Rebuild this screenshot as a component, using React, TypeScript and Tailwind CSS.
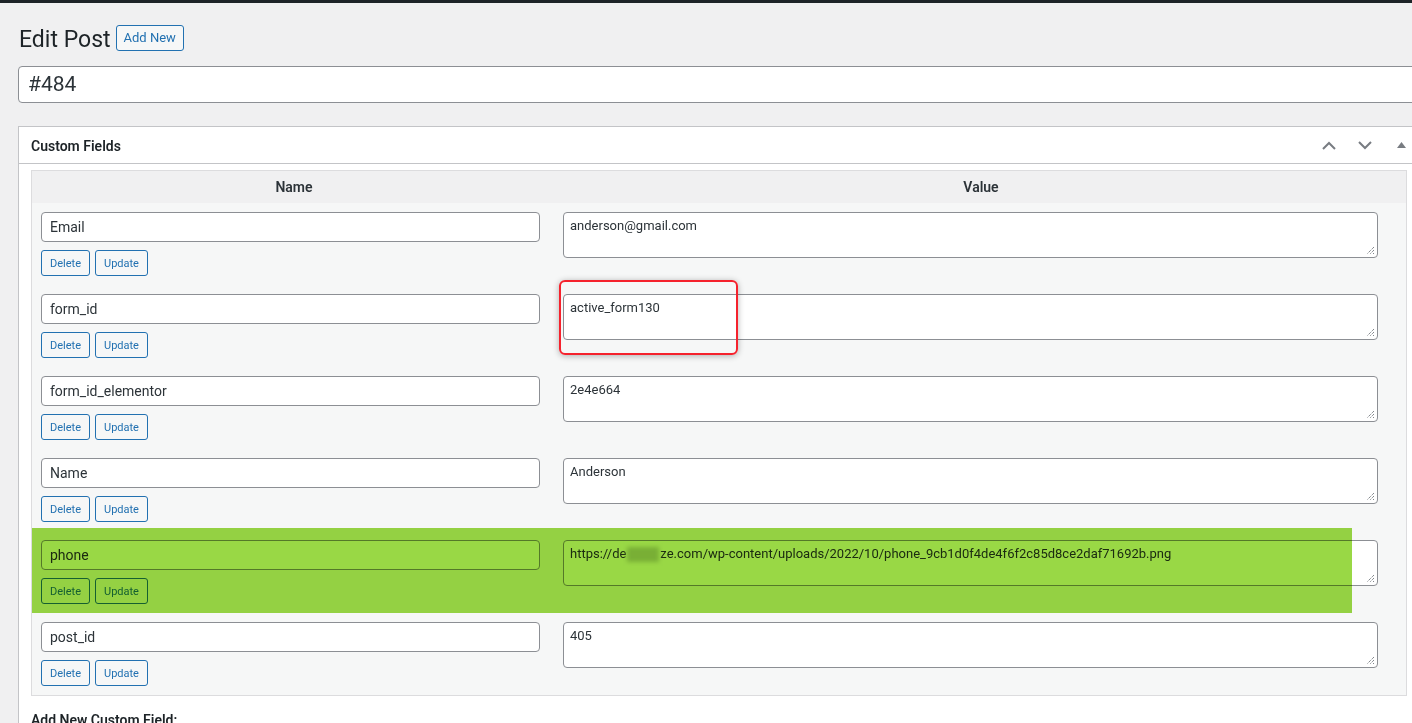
import React from 'react';

const FONT = { fontFamily: '"Segoe UI", Roboto, "Noto Sans", sans-serif' };

interface MetaRow {
  key: string;
  value: string;
}

const rows: MetaRow[] = [
  { key: 'Email', value: 'anderson@gmail.com' },
  { key: 'form_id', value: 'active_form130' },
  { key: 'form_id_elementor', value: '2e4e664' },
  { key: 'Name', value: 'Anderson' },
  { key: 'phone', value: 'url' },
  { key: 'post_id', value: '405' },
];

const SmallButton: React.FC<{ label: string }> = ({ label }) => (
  <button className="h-[26px] px-[8px] text-[11px] leading-none text-[#2271b1] bg-[#f6f7f7] border border-[#2271b1] rounded-[3px]">
    {label}
  </button>
);

const ResizeGrip = () => (
  <svg width="9" height="9" viewBox="0 0 9 9" className="absolute right-[2px] bottom-[2px]">
    <path d="M8 1L1 8M8 4L4 8M8 7L7 8" stroke="#50575e" strokeWidth="1" strokeDasharray="1 1" />
  </svg>
);

const UrlValue = () => (
  <span>
    https://de
    <span className="inline-block w-[32px] h-[15px] align-middle bg-[#c9cfc4] blur-[2px] mx-[1px]"></span>
    ze.com/wp-content/uploads/2022/10/phone_9cb1d0f4de4f6f2c85d8ce2daf71692b.png
  </span>
);

const App: React.FC = () => {
  return (
    <div className="relative w-[1412px] h-[723px] overflow-hidden bg-[#f0f0f1] text-[#1d2327]" style={FONT}>
      {/* admin bar edge */}
      <div className="h-[3px] bg-[#1d2327]" />

      <div className="ml-[18px] w-[1402px]">
        {/* Heading */}
        <div className="flex items-center pt-[21px] h-[48px]">
          <h1 className="ml-[1px] mt-[3px] text-[23px] leading-[27px] font-normal text-[#1d2327]">Edit Post</h1>
          <button className="ml-[5px] h-[26px] px-[7px] text-[13px] text-[#2271b1] bg-[#f6f7f7] border border-[#2271b1] rounded-[3px]">
            Add New
          </button>
        </div>

        {/* Title */}
        <div className="mt-[15px] h-[37px] bg-white border border-[#8c8f94] rounded-[4px] flex items-center pl-[9px] text-[21px] text-[#2c3338]">
          #484
        </div>

        {/* Custom Fields postbox */}
        <div className="mt-[23px] bg-white border border-[#c3c4c7]">
          <div className="h-[37px] flex items-center border-b border-[#c3c4c7]">
            <h2 className="flex-1 pl-[12px] pt-[2px] text-[14px] font-semibold text-[#1d2327]">Custom Fields</h2>
            <div className="flex items-center text-[#787c82]">
              <span className="w-[36px] flex justify-center">
                <svg width="14" height="9" viewBox="0 0 14 9">
                  <path d="M1 8L7 2L13 8" fill="none" stroke="#787c82" strokeWidth="2" />
                </svg>
              </span>
              <span className="w-[36px] flex justify-center">
                <svg width="14" height="9" viewBox="0 0 14 9">
                  <path d="M1 1L7 7L13 1" fill="none" stroke="#787c82" strokeWidth="2" />
                </svg>
              </span>
              <span className="w-[36px] flex justify-center">
                <svg width="9" height="6" viewBox="0 0 9 6">
                  <path d="M4.5 0L9 6H0Z" fill="#787c82" />
                </svg>
              </span>
            </div>
          </div>

          <div className="px-[12px] pt-[6px] pb-[12px]">
            <div className="border border-[#dcdcde] bg-[#f6f7f7] w-[1376px]">
              <div className="flex h-[32px] items-center bg-[#f0f0f1] text-[14px] font-semibold text-[#2c3338]">
                <div className="w-[524px] text-center">Name</div>
                <div className="flex-1 text-center">Value</div>
              </div>

              {rows.map((row) => (
                <div key={row.key} className="flex h-[82px]">
                  <div className="w-[524px] pl-[9px] pr-[16px] pt-[9px]">
                    <div className="h-[30px] bg-white border border-[#8c8f94] rounded-[4px] flex items-center pl-[8px] text-[14px] text-[#2c3338]">
                      {row.key}
                    </div>
                    <div className="mt-[8px] flex gap-[5px]">
                      <SmallButton label="Delete" />
                      <SmallButton label="Update" />
                    </div>
                  </div>
                  <div className="flex-1 pl-[7px] pr-[28px] pt-[9px]">
                    <div className="relative h-[46px] bg-white border border-[#8c8f94] rounded-[4px] pl-[6px] pt-[3px] text-[13px] leading-[20px] text-[#2c3338]">
                      {row.value === 'url' ? <UrlValue /> : row.value}
                      <ResizeGrip />
                    </div>
                  </div>
                </div>
              ))}
            </div>

            <div className="mt-[14px] text-[14px] font-semibold text-[#1d2327]">Add New Custom Field:</div>
          </div>
        </div>
      </div>

      {/* annotations drawn over the screenshot */}
      <div className="absolute left-[559px] top-[280px] w-[179px] h-[75px] border-2 border-[#f5222d] rounded-[6px] shadow-[0_1px_6px_rgba(0,0,0,0.3)]" />
      <div className="absolute left-[32px] top-[528px] w-[1320px] h-[85px] bg-[#99d845] mix-blend-multiply" />
    </div>
  );
};

export default App;
